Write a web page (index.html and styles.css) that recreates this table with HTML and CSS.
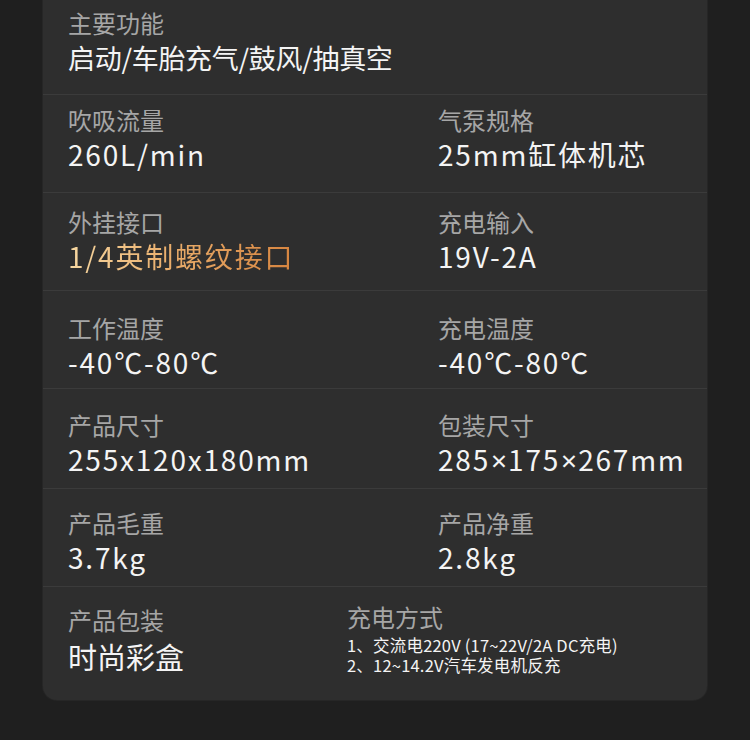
FILE: index.html
```html
<!DOCTYPE html>
<html lang="zh-CN">
<head>
    <meta charset="UTF-8">
    <meta name="viewport" content="width=device-width, initial-scale=1.0">
    <title>产品参数</title>
    <link rel="stylesheet" href="styles.css">
</head>
<body>
    <div class="spec-card">
        <div class="spec-row">
            <div class="spec-item">
                <div class="spec-label">主要功能</div>
                <div class="spec-value tight">启动/车胎充气/鼓风/抽真空</div>
            </div>
        </div>
        <div class="spec-row">
            <div class="spec-item">
                <div class="spec-label">吹吸流量</div>
                <div class="spec-value">260L/min</div>
            </div>
            <div class="spec-item">
                <div class="spec-label">气泵规格</div>
                <div class="spec-value">25mm缸体机芯</div>
            </div>
        </div>
        <div class="spec-row">
            <div class="spec-item">
                <div class="spec-label">外挂接口</div>
                <div class="spec-value"><span class="gold">1/4英制螺纹接口</span></div>
            </div>
            <div class="spec-item">
                <div class="spec-label">充电输入</div>
                <div class="spec-value">19V-2A</div>
            </div>
        </div>
        <div class="spec-row">
            <div class="spec-item">
                <div class="spec-label">工作温度</div>
                <div class="spec-value">-40℃-80℃</div>
            </div>
            <div class="spec-item">
                <div class="spec-label">充电温度</div>
                <div class="spec-value">-40℃-80℃</div>
            </div>
        </div>
        <div class="spec-row">
            <div class="spec-item">
                <div class="spec-label">产品尺寸</div>
                <div class="spec-value">255x120x180mm</div>
            </div>
            <div class="spec-item">
                <div class="spec-label">包装尺寸</div>
                <div class="spec-value">285<span class="times">×</span>175<span class="times">×</span>267mm</div>
            </div>
        </div>
        <div class="spec-row">
            <div class="spec-item">
                <div class="spec-label">产品毛重</div>
                <div class="spec-value">3.7kg</div>
            </div>
            <div class="spec-item">
                <div class="spec-label">产品净重</div>
                <div class="spec-value">2.8kg</div>
            </div>
        </div>
        <div class="spec-row spec-row-last">
            <div class="spec-item pack">
                <div class="spec-label">产品包装</div>
                <div class="spec-value big">时尚彩盒</div>
            </div>
            <div class="spec-item charge">
                <div class="spec-label">充电方式</div>
                <ul class="charge-list">
                    <li>1、交流电220V (17~22V/2A DC充电)</li>
                    <li>2、12~14.2V汽车发电机反充</li>
                </ul>
            </div>
        </div>
    </div>
</body>
</html>
```

FILE: styles.css
```css
:root {
    --page: #1f1f1f;
    --card: #2e2e2e;
    --line: #3b3b3b;
    --label: #a6a6a6;
    --value: #f4f4f4;
}
* { box-sizing: border-box; margin: 0; padding: 0; }
body {
    font-family: "Noto Sans CJK SC", "Noto Sans", sans-serif;
    background: var(--page);
    min-height: 100vh;
}
.spec-card {
    width: 664px;
    margin: 0 0 0 43px;
    background: var(--card);
    border-radius: 0 0 14px 14px;
    box-shadow: 0 0 0 1px #262626;
    padding-bottom: 25px;
}
.spec-row {
    display: grid;
    grid-template-columns: 370px 1fr;
    padding: 21px 25px 12px;
    border-bottom: 1px solid var(--line);
}
/* the rows in the source image are not evenly spaced */
.spec-row:nth-child(1) { padding-top: 8px; padding-bottom: 19px; }
.spec-row:nth-child(2) { padding-top: 10px; padding-bottom: 21px; }
.spec-row:nth-child(3) { padding-top: 14px; padding-bottom: 17px; }
.spec-row:nth-child(4) { padding-top: 22px; padding-bottom: 9px; }
.spec-row:nth-child(5) { padding-bottom: 11px; }
.spec-row:nth-child(6) { padding-top: 19px; }
.spec-label {
    font-size: 24px;
    line-height: 30px;
    color: var(--label);
}
.spec-value {
    margin-top: 2px;
    font-size: 28px;
    line-height: 34px;
    color: var(--value);
    letter-spacing: 1.8px;
    white-space: nowrap;
}
.spec-value.tight {
    margin-top: 3px;
    font-size: 27px;
    letter-spacing: -0.3px;
}
.times {
    font-family: "Noto Sans", sans-serif;
    letter-spacing: 0;
    margin: 0 1px;
}
.gold {
    display: inline-block;
    background: linear-gradient(90deg, #f7d8a2 0%, #eaae6c 45%, #d6843f 100%);
    -webkit-background-clip: text;
    background-clip: text;
    color: transparent;
}
.spec-row-last {
    grid-template-columns: 279px 1fr;
    align-items: start;
    padding: 0 25px;
    border-bottom: none;
}
.pack { padding-top: 18px; }
.spec-value.big {
    margin-top: 3px;
    font-size: 29px;
    line-height: 36px;
    letter-spacing: 0;
}
.charge { padding-top: 15px; }
.charge-list {
    list-style: none;
    margin-top: 3px;
    font-size: 16.5px;
    line-height: 20px;
    letter-spacing: 0.2px;
    color: var(--value);
    white-space: nowrap;
}
```
